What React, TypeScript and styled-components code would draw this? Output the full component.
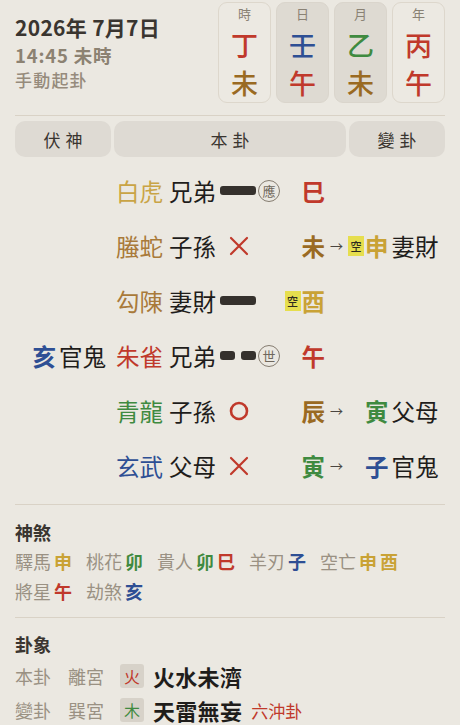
import React from "react";
import styled, { createGlobalStyle } from "styled-components";

const C = {
  bg: "#ebe8e1",
  ink: "#1f1d1b",
  dark: "#3a3530",
  gray: "#9a9183",
  line: "#d9d2c6",
  red: "#c0392b",
  green: "#3f8a40",
  blue: "#2e4f94",
  gold: "#c9a235",
  earth: "#9a6a22",
  brown: "#a97a3a",
  lightGold: "#c9a445",
};

const Global = createGlobalStyle`
  html, body { margin: 0; padding: 0; background: ${C.bg}; }
  body { font-family: "Noto Sans CJK TC", "Noto Sans", sans-serif; color: ${C.ink}; }
  * { box-sizing: border-box; }
`;

const Page = styled.div`
  width: 460px;
  min-height: 725px;
  padding: 0 15px;
  background: ${C.bg};
  overflow: hidden;
`;

const Header = styled.div`
  display: flex;
  justify-content: space-between;
  padding-top: 2px;
`;

const DateCol = styled.div`
  display: flex;
  flex-direction: column;
  padding-top: 12px;
`;

const Title = styled.div`
  font-size: 21px;
  font-weight: 700;
  line-height: 26px;
  letter-spacing: 0.3px;
  color: ${C.dark};
`;

const TimeLine = styled.div`
  font-size: 18.5px;
  font-weight: 700;
  line-height: 24px;
  letter-spacing: 0.8px;
  color: #8c8272;
  margin-top: 3px;
`;

const Mode = styled.div`
  font-size: 17px;
  font-weight: 500;
  line-height: 24px;
  letter-spacing: 1.2px;
  color: #968b7c;
  margin-top: 1px;
`;

const Pillars = styled.div`
  display: flex;
  gap: 5px;
`;

const Pillar = styled.div<{ $shade?: boolean }>`
  width: 53px;
  height: 101px;
  border-radius: 9px;
  border: 1px solid ${(p) => (p.$shade ? "#dad5cc" : "#ddd7cc")};
  background: ${(p) => (p.$shade ? "#dedad2" : "#ece9e2")};
  display: flex;
  flex-direction: column;
  align-items: center;
  padding-top: 3px;
`;

const PillarLabel = styled.div`
  font-size: 13px;
  line-height: 16px;
  color: #8a8275;
`;

const PillarChar = styled.div<{ $c: string }>`
  font-size: 27px;
  line-height: 30px;
  font-weight: 500;
  color: ${(p) => p.$c};
  margin-top: 8px;
`;

const Divider = styled.div<{ $mt: number }>`
  height: 1px;
  background: ${C.line};
  margin-top: ${(p) => p.$mt}px;
`;

const Tabs = styled.div`
  display: grid;
  grid-template-columns: 96px 1fr 96px;
  gap: 3px;
  margin-top: 5px;
`;

const Tab = styled.div`
  height: 36px;
  border-radius: 10px;
  background: #dedad3;
  display: flex;
  align-items: center;
  justify-content: center;
  font-size: 17px;
  letter-spacing: 5px;
  padding-left: 5px;
  color: ${C.dark};
`;

const YaoList = styled.div`
  margin-top: 6px;
  display: flex;
  flex-direction: column;
`;

const Row = styled.div`
  height: 55px;
  display: flex;
  align-items: center;
  font-size: 23.5px;
  line-height: 30px;
`;

const FuCell = styled.div`
  width: 101px;
  padding-right: 10px;
  display: flex;
  justify-content: flex-end;
  align-items: center;
`;

const GodCell = styled.div<{ $c: string }>`
  width: 53px;
  color: ${(p) => p.$c};
`;

const RelCell = styled.div`
  width: 51px;
  color: ${C.ink};
`;

const LineCell = styled.div`
  width: 38px;
  height: 30px;
  display: flex;
  align-items: center;
  justify-content: flex-start;
`;

const Bar = styled.div<{ $w: number }>`
  width: ${(p) => p.$w}px;
  height: 9px;
  border-radius: 3px;
  background: #35312d;
`;

const YinBar = styled.div`
  width: 36px;
  display: flex;
  justify-content: space-between;
`;

const MarkCell = styled.div`
  width: 26px;
  display: flex;
  align-items: center;
`;

const Mark = styled.div`
  width: 22px;
  height: 22px;
  border-radius: 50%;
  border: 1px solid #857c70;
  color: #6f675c;
  font-size: 13px;
  line-height: 20px;
  text-align: center;
`;

const BranchCell = styled.div`
  width: 41px;
  display: flex;
  justify-content: flex-end;
  align-items: center;
`;

const Branch = styled.span<{ $c: string }>`
  color: ${(p) => p.$c};
  font-weight: 700;
`;

const Kong = styled.span`
  display: inline-block;
  width: 16px;
  height: 20px;
  background: #e6de4e;
  color: #2d2a20;
  font-size: 11px;
  line-height: 20px;
  text-align: center;
  font-weight: 500;
  margin-right: 1px;
`;

const KongSlot = styled.span`
  display: inline-block;
  width: 17px;
`;

const ArrowCell = styled.div`
  width: 23px;
  text-align: center;
  font-size: 13px;
  color: #4a4540;
`;

const ChangeCell = styled.div`
  display: flex;
  align-items: center;
`;

const Rel = styled.span`
  color: ${C.ink};
  margin-left: 3px;
`;

const SectionTitle = styled.div<{ $mt: number }>`
  font-size: 18px;
  font-weight: 700;
  line-height: 22px;
  color: ${C.dark};
  margin-top: ${(p) => p.$mt}px;
`;

const ShaList = styled.div`
  margin-top: 3px;
  display: flex;
  flex-wrap: wrap;
  column-gap: 14px;
  width: 420px;
`;

const ShaItem = styled.div`
  display: flex;
  align-items: center;
  line-height: 30px;
  font-size: 18px;
`;

const Label = styled.span`
  color: ${C.gray};
`;

const ShaVal = styled.span<{ $c: string }>`
  color: ${(p) => p.$c};
  font-weight: 700;
  margin-left: 3px;
`;

const GuaList = styled.div`
  margin-top: 4px;
`;

const GuaRow = styled.div`
  display: flex;
  align-items: center;
  height: 34px;
`;

const GuaLabel = styled.span<{ $w: number }>`
  width: ${(p) => p.$w}px;
  font-size: 18px;
  color: ${C.gray};
`;

const Elem = styled.span<{ $c: string }>`
  width: 24px;
  height: 24px;
  border-radius: 3px;
  background: #d7d2c9;
  color: ${(p) => p.$c};
  font-size: 16px;
  line-height: 24px;
  text-align: center;
  margin-right: 9px;
`;

const GuaName = styled.span`
  font-size: 22px;
  font-weight: 700;
  color: ${C.ink};
  letter-spacing: 0.3px;
`;

const Clash = styled.span`
  font-size: 17px;
  color: ${C.red};
  margin-left: 9px;
`;

const Cross = () => (
  <svg width="22" height="22" viewBox="0 0 22 22" style={{ marginLeft: 8 }}>
    <path d="M3 3 L19 19 M19 3 L3 19" stroke={C.red} strokeWidth="2.2" strokeLinecap="round" />
  </svg>
);

const Circle = () => (
  <svg width="22" height="22" viewBox="0 0 22 22" style={{ marginLeft: 8 }}>
    <circle cx="11" cy="11" r="8" fill="none" stroke={C.red} strokeWidth="2.6" />
  </svg>
);

type Yao = {
  fu?: { b: string; c: string; rel: string };
  god: string;
  godC: string;
  rel: string;
  line: "yang" | "yin" | "oldYin" | "oldYang";
  mark?: string;
  kong?: boolean;
  branch: string;
  bc: string;
  change?: { kong?: boolean; b: string; c: string; rel: string };
};

const yaos: Yao[] = [
  { god: "白虎", godC: C.lightGold, rel: "兄弟", line: "yang", mark: "應", branch: "巳", bc: C.red },
  { god: "螣蛇", godC: C.brown, rel: "子孫", line: "oldYin", branch: "未", bc: C.earth, change: { kong: true, b: "申", c: C.gold, rel: "妻財" } },
  { god: "勾陳", godC: C.brown, rel: "妻財", line: "yang", kong: true, branch: "酉", bc: C.gold },
  { fu: { b: "亥", c: C.blue, rel: "官鬼" }, god: "朱雀", godC: C.red, rel: "兄弟", line: "yin", mark: "世", branch: "午", bc: C.red },
  { god: "青龍", godC: C.green, rel: "子孫", line: "oldYang", branch: "辰", bc: C.earth, change: { b: "寅", c: C.green, rel: "父母" } },
  { god: "玄武", godC: C.blue, rel: "父母", line: "oldYin", branch: "寅", bc: C.green, change: { b: "子", c: C.blue, rel: "官鬼" } },
];

const pillars = [
  { label: "時", s: "丁", sc: C.red, b: "未", bc: C.earth, shade: false },
  { label: "日", s: "壬", sc: C.blue, b: "午", bc: C.red, shade: true },
  { label: "月", s: "乙", sc: C.green, b: "未", bc: C.earth, shade: true },
  { label: "年", s: "丙", sc: C.red, b: "午", bc: C.red, shade: false },
];

const sha: { label: string; vals: { v: string; c: string }[] }[] = [
  { label: "驛馬", vals: [{ v: "申", c: C.gold }] },
  { label: "桃花", vals: [{ v: "卯", c: C.green }] },
  { label: "貴人", vals: [{ v: "卯", c: C.green }, { v: "巳", c: C.red }] },
  { label: "羊刃", vals: [{ v: "子", c: C.blue }] },
  { label: "空亡", vals: [{ v: "申", c: C.gold }, { v: "酉", c: C.gold }] },
  { label: "將星", vals: [{ v: "午", c: C.red }] },
  { label: "劫煞", vals: [{ v: "亥", c: C.blue }] },
];

function LineSymbol({ line }: { line: Yao["line"] }) {
  if (line === "yang") return <Bar $w={36} />;
  if (line === "yin")
    return (
      <YinBar>
        <Bar $w={15} />
        <Bar $w={15} />
      </YinBar>
    );
  if (line === "oldYin") return <Cross />;
  return <Circle />;
}

export default function App() {
  return (
    <Page>
      <Global />
      <Header>
        <DateCol>
          <Title>2026年 7月7日</Title>
          <TimeLine>14:45 未時</TimeLine>
          <Mode>手動起卦</Mode>
        </DateCol>
        <Pillars>
          {pillars.map((p) => (
            <Pillar key={p.label} $shade={p.shade}>
              <PillarLabel>{p.label}</PillarLabel>
              <PillarChar $c={p.sc}>{p.s}</PillarChar>
              <PillarChar $c={p.bc}>{p.b}</PillarChar>
            </Pillar>
          ))}
        </Pillars>
      </Header>
      <Divider $mt={12} />
      <Tabs>
        <Tab>伏神</Tab>
        <Tab>本卦</Tab>
        <Tab>變卦</Tab>
      </Tabs>
      <YaoList>
        {yaos.map((y, i) => (
          <Row key={i}>
            <FuCell>
              {y.fu && (
                <>
                  <Branch $c={y.fu.c}>{y.fu.b}</Branch>
                  <Rel>{y.fu.rel}</Rel>
                </>
              )}
            </FuCell>
            <GodCell $c={y.godC}>{y.god}</GodCell>
            <RelCell>{y.rel}</RelCell>
            <LineCell>
              <LineSymbol line={y.line} />
            </LineCell>
            <MarkCell>{y.mark && <Mark>{y.mark}</Mark>}</MarkCell>
            <BranchCell>
              {y.kong && <Kong>空</Kong>}
              <Branch $c={y.bc}>{y.branch}</Branch>
            </BranchCell>
            <ArrowCell>{y.change ? "→" : ""}</ArrowCell>
            {y.change && (
              <ChangeCell>
                {y.change.kong ? <Kong>空</Kong> : <KongSlot />}
                <Branch $c={y.change.c}>{y.change.b}</Branch>
                <Rel>{y.change.rel}</Rel>
              </ChangeCell>
            )}
          </Row>
        ))}
      </YaoList>
      <Divider $mt={11} />
      <SectionTitle $mt={16}>神煞</SectionTitle>
      <ShaList>
        {sha.map((s) => (
          <ShaItem key={s.label}>
            <Label>{s.label}</Label>
            {s.vals.map((v, i) => (
              <ShaVal key={i} $c={v.c}>
                {v.v}
              </ShaVal>
            ))}
          </ShaItem>
        ))}
      </ShaList>
      <Divider $mt={11} />
      <SectionTitle $mt={15}>卦象</SectionTitle>
      <GuaList>
        <GuaRow>
          <GuaLabel $w={53}>本卦</GuaLabel>
          <GuaLabel $w={52}>離宮</GuaLabel>
          <Elem $c={C.red}>火</Elem>
          <GuaName>火水未濟</GuaName>
        </GuaRow>
        <GuaRow>
          <GuaLabel $w={53}>變卦</GuaLabel>
          <GuaLabel $w={52}>巽宮</GuaLabel>
          <Elem $c={C.green}>木</Elem>
          <GuaName>天雷無妄</GuaName>
          <Clash>六沖卦</Clash>
        </GuaRow>
      </GuaList>
    </Page>
  );
}
